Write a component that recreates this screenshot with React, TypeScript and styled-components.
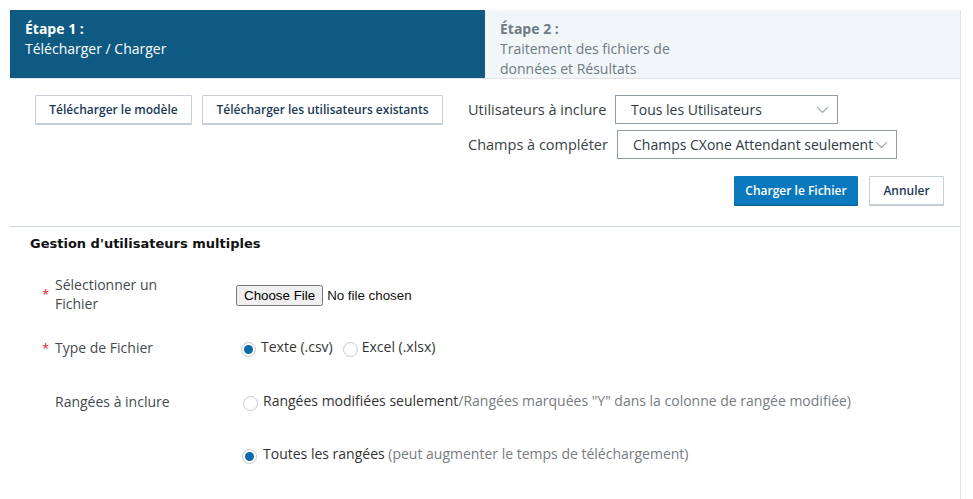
import React from "react";
import styled, { createGlobalStyle } from "styled-components";

const Global = createGlobalStyle`
  html, body { margin: 0; padding: 0; background: #ffffff; }
  body { font-family: "Open Sans", "Noto Sans", sans-serif; color: #333; }
  * { box-sizing: border-box; }
`;

const Frame = styled.div`
  margin: 10px 0 0 10px;
  width: 951px;
  min-height: 489px;
  border-right: 1px solid #dde3ea;
`;

const Stepper = styled.div`
  display: flex;
  height: 69px;
  border-bottom: 1px solid #dfe4ea;
`;

const Step = styled.div<{ $active?: boolean }>`
  flex: ${(p) => (p.$active ? "0 0 475px" : "1")};
  background: ${(p) => (p.$active ? "#0e5a82" : "#f1f6f9")};
  color: ${(p) => (p.$active ? "#ffffff" : "#6e7a84")};
  padding: 9px 15px;
  font-size: 14px;
  line-height: 20px;
`;

const StepTitle = styled.div`
  font-weight: 700;
`;

const StepText = styled.div`
  max-width: 185px;
`;

const Toolbar = styled.div`
  display: flex;
  justify-content: space-between;
  padding: 16px 0 0 25px;
`;

const BtnGroup = styled.div`
  display: flex;
  gap: 10px;
  align-items: flex-start;
`;

const Button = styled.button<{ $primary?: boolean; $w?: number }>`
  height: 29px;
  width: ${(p) => (p.$w ? `${p.$w}px` : "auto")};
  padding: 0 4px;
  white-space: nowrap;
  font-family: "Open Sans", sans-serif;
  font-size: 12px;
  font-weight: 600;
  border-radius: 1px;
  cursor: pointer;
  background: ${(p) => (p.$primary ? "#0a78bd" : "#ffffff")};
  color: ${(p) => (p.$primary ? "#ffffff" : "#1c3a58")};
  border: 1px solid ${(p) => (p.$primary ? "#0a78bd" : "#c8cfd6")};
  box-shadow: 0 1px 0 ${(p) => (p.$primary ? "#0b5a8c" : "#c2cad2")};
`;

const Fields = styled.div`
  display: flex;
  flex-direction: column;
  gap: 6px;
  width: 492px;
`;

const FieldRow = styled.div`
  display: flex;
  align-items: center;
`;

const FieldLabel = styled.span<{ $w: number }>`
  width: ${(p) => p.$w}px;
  font-size: 14.5px;
  color: #3a3f44;
`;

const Select = styled.div<{ $w: number }>`
  width: ${(p) => p.$w}px;
  height: 29px;
  border: 1px solid #8f9ba6;
  display: flex;
  align-items: center;
  justify-content: space-between;
  padding: 0 8px 0 15px;
  font-size: 14px;
  color: #2d3a44;
  white-space: nowrap;
`;

const Chevron = () => (
  <svg width="13" height="8" viewBox="0 0 13 8" fill="none">
    <path d="M1 1.2 L6.5 6.5 L12 1.2" stroke="#9aa5ae" strokeWidth="1.1" />
  </svg>
);

const Actions = styled.div`
  display: flex;
  justify-content: flex-end;
  gap: 11px;
  padding: 17px 16px 21px 0;
`;

const Divider = styled.div`
  border-top: 1px solid #cdd5dd;
`;

const Section = styled.div`
  padding: 7px 0 0 20px;
`;

const SectionTitle = styled.h2`
  margin: 0;
  font-family: "DejaVu Sans", "Noto Sans", sans-serif;
  font-size: 13px;
  font-weight: 700;
  line-height: 19px;
  color: #111;
`;

const FormRow = styled.div<{ $top: number }>`
  display: grid;
  grid-template-columns: 13px 181px 1fr;
  align-items: center;
  margin-top: ${(p) => p.$top}px;
  padding-left: 12px;
`;

const Required = styled.span`
  color: #d9242a;
  font-size: 13px;
  align-self: center;
`;

const Label = styled.span`
  font-size: 14px;
  line-height: 19px;
  color: #444a50;
  max-width: 140px;
`;

const FileInput = styled.input`
  font-family: "Liberation Sans", Arial, sans-serif;
  font-size: 13.333px;
  color: #111;
`;

const Options = styled.div<{ $indent: number }>`
  display: flex;
  align-items: center;
  gap: 10px;
  font-size: 14px;
  padding-left: ${(p) => p.$indent}px;
`;

const RadioLabel = styled.label<{ $gap: number }>`
  display: flex;
  align-items: center;
  gap: ${(p) => p.$gap}px;
  color: #333;
  white-space: nowrap;
`;

const RadioCircle = styled.span<{ $checked?: boolean }>`
  width: 15px;
  height: 15px;
  border-radius: 50%;
  border: 1px solid #c3cad1;
  background: #fff;
  display: inline-flex;
  align-items: center;
  justify-content: center;
  margin-top: 4px;
  &::after {
    content: "";
    width: 9px;
    height: 9px;
    border-radius: 50%;
    background: ${(p) => (p.$checked ? "#0b6aa9" : "transparent")};
  }
`;

const RadioText = styled.span`
  margin-top: -3px;
`;

const Hint = styled.span`
  color: #777c82;
`;

const Radio = ({
  checked,
  gap = 5,
  children,
}: {
  checked?: boolean;
  gap?: number;
  children: React.ReactNode;
}) => (
  <RadioLabel $gap={gap}>
    <RadioCircle $checked={checked} />
    <RadioText>{children}</RadioText>
  </RadioLabel>
);

export default function App() {
  return (
    <>
      <Global />
      <Frame>
        <Stepper>
          <Step $active>
            <StepTitle>Étape 1 :</StepTitle>
            <StepText>Télécharger / Charger</StepText>
          </Step>
          <Step>
            <StepTitle>Étape 2 :</StepTitle>
            <StepText>Traitement des fichiers de données et Résultats</StepText>
          </Step>
        </Stepper>

        <Toolbar>
          <BtnGroup>
            <Button $w={157}>Télécharger le modèle</Button>
            <Button $w={241}>Télécharger les utilisateurs existants</Button>
          </BtnGroup>
          <Fields>
            <FieldRow>
              <FieldLabel $w={147}>Utilisateurs à inclure</FieldLabel>
              <Select $w={223}>
                Tous les Utilisateurs
                <Chevron />
              </Select>
            </FieldRow>
            <FieldRow>
              <FieldLabel $w={149}>Champs à compléter</FieldLabel>
              <Select $w={280}>
                Champs CXone Attendant seulement
                <Chevron />
              </Select>
            </FieldRow>
          </Fields>
        </Toolbar>

        <Actions>
          <Button $primary $w={124}>Charger le Fichier</Button>
          <Button $w={75}>Annuler</Button>
        </Actions>

        <Divider />

        <Section>
          <SectionTitle>Gestion d'utilisateurs multiples</SectionTitle>

          <FormRow $top={22}>
            <Required>*</Required>
            <Label>Sélectionner un Fichier</Label>
            <div>
              <FileInput type="file" />
            </div>
          </FormRow>

          <FormRow $top={25}>
            <Required>*</Required>
            <Label>Type de Fichier</Label>
            <Options $indent={5}>
              <Radio checked>Texte (.csv)</Radio>
              <Radio gap={4}>Excel (.xlsx)</Radio>
            </Options>
          </FormRow>

          <FormRow $top={35}>
            <span />
            <Label>Rangées à inclure</Label>
            <Options $indent={7}>
              <Radio>
                Rangées modifiées seulement
                <Hint>/Rangées marquées "Y" dans la colonne de rangée modifiée)</Hint>
              </Radio>
            </Options>
          </FormRow>

          <FormRow $top={34}>
            <span />
            <span />
            <Options $indent={6}>
              <Radio checked gap={6}>
                Toutes les rangées
                <Hint> (peut augmenter le temps de téléchargement)</Hint>
              </Radio>
            </Options>
          </FormRow>
        </Section>
      </Frame>
    </>
  );
}
